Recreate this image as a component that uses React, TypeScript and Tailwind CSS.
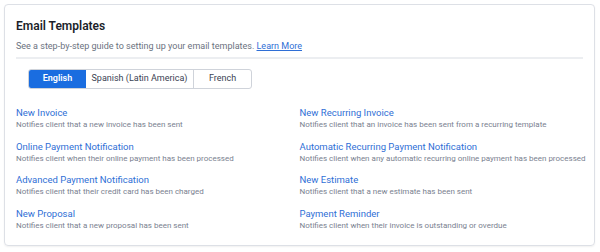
import { FC } from 'react';

type Template = { title: string; desc: string };

const templates: Template[] = [
    { title: 'New Invoice', desc: 'Notifies client that a new invoice has been sent' },
    { title: 'New Recurring Invoice', desc: 'Notifies client that an invoice has been sent from a recurring template' },
    { title: 'Online Payment Notification', desc: 'Notifies client when their online payment has been processed' },
    { title: 'Automatic Recurring Payment Notification', desc: 'Notifies client when any automatic recurring online payment has been processed' },
    { title: 'Advanced Payment Notification', desc: 'Notifies client that their credit card has been charged' },
    { title: 'New Estimate', desc: 'Notifies client that a new estimate has been sent' },
    { title: 'New Proposal', desc: 'Notifies client that a new proposal has been sent' },
    { title: 'Payment Reminder', desc: 'Notifies client when their invoice is outstanding or overdue' },
];

const languages = ['English', 'Spanish (Latin America)', 'French'];

const App: FC = () => {
    return (
        <div className="w-[600px] h-[252px] bg-white p-[4px] pr-[5px] font-['Roboto',sans-serif]">
            <div className="h-[242px] rounded-[4px] border border-[#dde0e6] shadow-[0_1px_2px_rgba(0,0,0,0.06)] px-[11px] pt-[14px]">
                {/* Header */}
                <h1 className="text-[12px] leading-[14px] font-semibold text-[#1b1f2a]">Email Templates</h1>
                <p className="mt-[7px] text-[9px] leading-[12px] text-[#6b7280] whitespace-nowrap">
                    See a step-by-step guide to setting up your email templates.{' '}
                    <a className="text-[#2f6fd6] underline">Learn More</a>
                </p>
                <div className="mt-[5px] h-[2px] bg-[#eceef1]"></div>

                {/* Language tabs */}
                <div className="ml-[12px] mt-[10px] flex w-[224px] h-[20px] rounded-[3px] border border-[#cfd3da] overflow-hidden text-[9px] whitespace-nowrap">
                    {languages.map((lang, i) => (
                        <button
                            key={lang}
                            className={
                                i === 0
                                    ? 'w-[57px] bg-[#1a6de0] text-white font-semibold'
                                    : i === 1
                                      ? 'w-[108px] text-[#3b4252] border-r border-[#cfd3da]'
                                      : 'flex-1 text-[#3b4252]'
                            }
                        >
                            {lang}
                        </button>
                    ))}
                </div>

                {/* Templates */}
                <div className="mt-[18px] grid grid-cols-2 gap-y-[10.5px]">
                    {templates.map((t) => (
                        <div key={t.title} className="flex flex-col whitespace-nowrap">
                            <a className="text-[9.5px] leading-[12px] text-[#2f6fd6]">{t.title}</a>
                            <span className="mt-[1px] text-[8px] leading-[10px] text-[#7a8190]">{t.desc}</span>
                        </div>
                    ))}
                </div>
            </div>
        </div>
    );
};

export default App;
